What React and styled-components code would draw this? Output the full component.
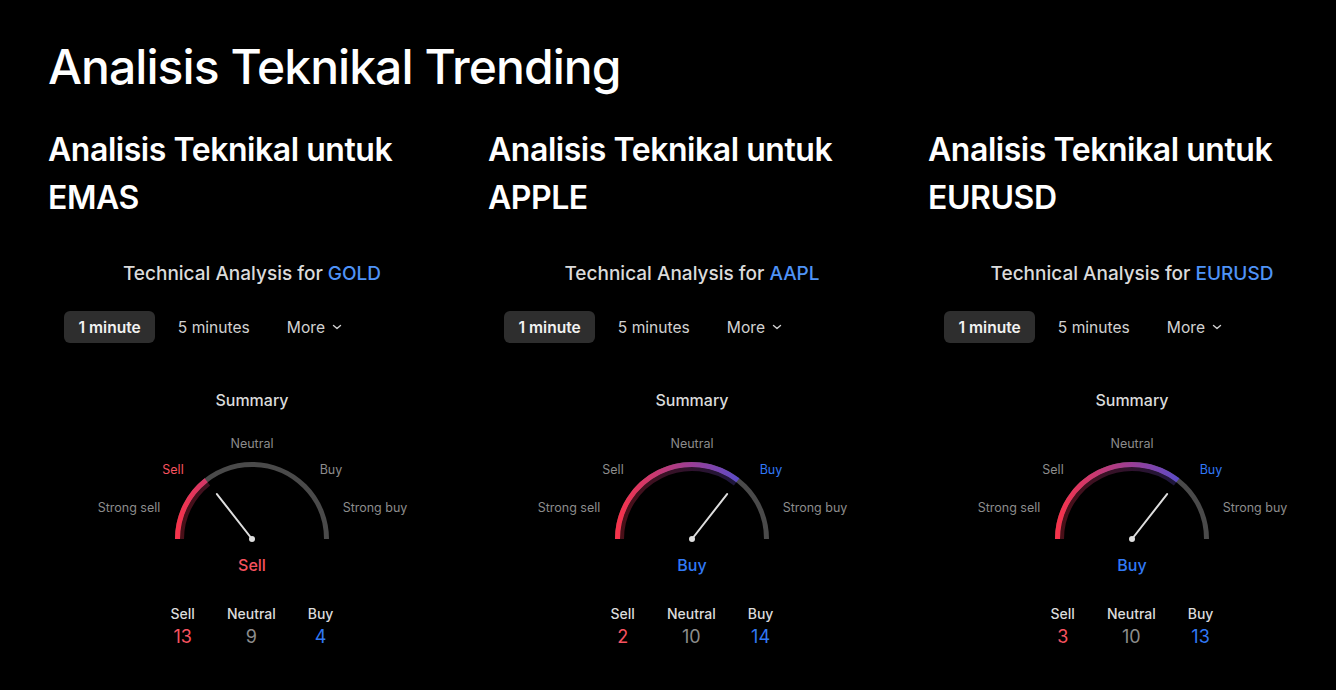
import React from "react";
import styled, { createGlobalStyle } from "styled-components";

const GlobalStyle = createGlobalStyle`
  html, body {
    margin: 0;
    padding: 0;
    background: #000;
  }
  body {
    font-family: Inter, "Noto Sans", sans-serif;
    -webkit-font-smoothing: antialiased;
  }
`;

const RED = "#f7525f";
const BLUE = "#3179f5";
const GRAY = "#8c8c8c";

const Page = styled.div`
  background: #000;
  min-height: 690px;
  padding: 38px 0 0 48px;
  box-sizing: border-box;
  color: #fff;
`;

const PageTitle = styled.h1`
  margin: 0 0 30px;
  font-size: 48px;
  line-height: 58px;
  font-weight: 500;
  letter-spacing: -0.95px;
  color: #fff;
`;

const Columns = styled.div`
  display: grid;
  grid-template-columns: repeat(3, 408px);
  column-gap: 32px;
`;

const Column = styled.div`
  display: flex;
  flex-direction: column;
`;

const ColumnTitle = styled.h2`
  margin: 0 0 40px;
  font-size: 32px;
  line-height: 48px;
  font-weight: 600;
  letter-spacing: -0.45px;
  color: #fff;
`;

const WidgetTitle = styled.div`
  text-align: center;
  font-size: 19px;
  line-height: 24px;
  font-weight: 500;
  color: #dbdbdb;
  margin-bottom: 25px;

  a {
    color: #4f93f7;
    text-decoration: none;
  }
`;

const Tabs = styled.div`
  display: flex;
  gap: 8px;
  padding-left: 16px;
  margin-bottom: 45px;
`;

const Tab = styled.div`
  display: flex;
  align-items: center;
  gap: 7px;
  height: 32px;
  padding: 0 14.5px;
  border-radius: 6px;
  font-size: 15.6px;
  font-weight: ${(p) => (p.active ? 600 : 400)};
  color: ${(p) => (p.active ? "#f2f2f2" : "#d1d1d1")};
  background: ${(p) => (p.active ? "#2e2e2e" : "transparent")};
`;

const SummaryLabel = styled.div`
  text-align: center;
  font-size: 16px;
  line-height: 24px;
  font-weight: 500;
  color: #dbdbdb;
  margin-bottom: 18px;
`;

const GaugeBox = styled.div`
  position: relative;
  width: 320px;
  height: 120px;
  margin: 0 auto;

  svg {
    position: absolute;
    left: 0;
    top: 0;
  }
`;

const GaugeLabel = styled.span`
  position: absolute;
  transform: translate(-50%, -50%);
  white-space: nowrap;
  font-size: 12.5px;
  line-height: 16px;
  color: ${(p) => p.color || GRAY};
`;

const Result = styled.div`
  text-align: center;
  margin-top: 3px;
  font-size: 16px;
  line-height: 24px;
  font-weight: 500;
  color: ${(p) => p.color};
`;

const Counters = styled.div`
  display: flex;
  justify-content: center;
  gap: 32px;
  margin-top: 28px;
`;

const Counter = styled.div`
  display: flex;
  flex-direction: column;
  align-items: center;
`;

const CounterName = styled.span`
  font-size: 14px;
  line-height: 18px;
  font-weight: 500;
  color: #dbdbdb;
`;

const CounterValue = styled.span`
  margin-top: 2px;
  font-size: 18px;
  line-height: 24px;
  color: ${(p) => p.color};
`;

const Chevron = () => (
  <svg width="10" height="10" viewBox="0 0 10 10" fill="none">
    <path d="M1.5 3.5 L5 6.5 L8.5 3.5" stroke="#d1d1d1" strokeWidth="1.4" strokeLinecap="round" strokeLinejoin="round" />
  </svg>
);

const CX = 160;
const CY = 109;
const R = 74.5;

const pt = (r, deg) => {
  const a = (deg * Math.PI) / 180;
  return [CX + r * Math.cos(a), CY - r * Math.sin(a)];
};

const arc = (r, from, to) => {
  const [x1, y1] = pt(r, from);
  const [x2, y2] = pt(r, to);
  return `M ${x1} ${y1} A ${r} ${r} 0 0 1 ${x2} ${y2}`;
};

const Gauge = ({ id, angle, active }) => {
  const [nx, ny] = pt(57, angle);
  const labels = [
    { key: "strong-sell", text: "Strong sell", x: 37, y: 78 },
    { key: "sell", text: "Sell", x: 81, y: 40 },
    { key: "neutral", text: "Neutral", x: 160, y: 14 },
    { key: "buy", text: "Buy", x: 239, y: 40 },
    { key: "strong-buy", text: "Strong buy", x: 283, y: 78 },
  ];
  return (
    <GaugeBox>
      <svg width="320" height="120" viewBox="0 0 320 120">
        <defs>
          <linearGradient id={id} gradientUnits="userSpaceOnUse" x1={CX - R} y1="0" x2={CX + R} y2="0">
            <stop offset="0" stopColor="#f7334b" />
            <stop offset="0.5" stopColor="#9a3e96" />
            <stop offset="0.82" stopColor="#5a4cc8" />
            <stop offset="1" stopColor="#3a5ae8" />
          </linearGradient>
        </defs>
        <path d={arc(R, 180, 0)} stroke="#4a4a4a" strokeWidth="5" fill="none" />
        <path d={arc(R, 180, angle)} stroke={`url(#${id})`} strokeWidth="5" fill="none" />
        <path d={arc(R - 4.5, 180, angle)} stroke={`url(#${id})`} strokeOpacity="0.3" strokeWidth="4" fill="none" />
        <line x1={CX} y1={CY} x2={nx} y2={ny} stroke="#dedede" strokeWidth="2" strokeLinecap="round" />
        <circle cx={CX} cy={CY} r="3" fill="#dedede" />
      </svg>
      {labels.map((l) => (
        <GaugeLabel
          key={l.key}
          style={{ left: l.x, top: l.y }}
          color={l.key === active ? (active === "sell" ? RED : BLUE) : undefined}
        >
          {l.text}
        </GaugeLabel>
      ))}
    </GaugeBox>
  );
};

const items = [
  { name: "EMAS", ticker: "GOLD", angle: 128, active: "sell", result: "Sell", counts: [13, 9, 4] },
  { name: "APPLE", ticker: "AAPL", angle: 52, active: "buy", result: "Buy", counts: [2, 10, 14] },
  { name: "EURUSD", ticker: "EURUSD", angle: 52, active: "buy", result: "Buy", counts: [3, 10, 13] },
];

const TechWidget = ({ item }) => (
  <>
    <WidgetTitle>
      Technical Analysis for <a href="#">{item.ticker}</a>
    </WidgetTitle>
    <Tabs>
      <Tab active>1 minute</Tab>
      <Tab>5 minutes</Tab>
      <Tab>
        More <Chevron />
      </Tab>
    </Tabs>
    <SummaryLabel>Summary</SummaryLabel>
    <Gauge id={`grad-${item.ticker}`} angle={item.angle} active={item.active} />
    <Result color={item.active === "sell" ? RED : BLUE}>{item.result}</Result>
    <Counters>
      <Counter>
        <CounterName>Sell</CounterName>
        <CounterValue color={RED}>{item.counts[0]}</CounterValue>
      </Counter>
      <Counter>
        <CounterName>Neutral</CounterName>
        <CounterValue color={GRAY}>{item.counts[1]}</CounterValue>
      </Counter>
      <Counter>
        <CounterName>Buy</CounterName>
        <CounterValue color={BLUE}>{item.counts[2]}</CounterValue>
      </Counter>
    </Counters>
  </>
);

export default function App() {
  return (
    <>
      <GlobalStyle />
      <Page>
        <PageTitle>Analisis Teknikal Trending</PageTitle>
        <Columns>
          {items.map((item) => (
            <Column key={item.ticker}>
              <ColumnTitle>
                Analisis Teknikal untuk
                <br />
                {item.name}
              </ColumnTitle>
              <TechWidget item={item} />
            </Column>
          ))}
        </Columns>
      </Page>
    </>
  );
}
